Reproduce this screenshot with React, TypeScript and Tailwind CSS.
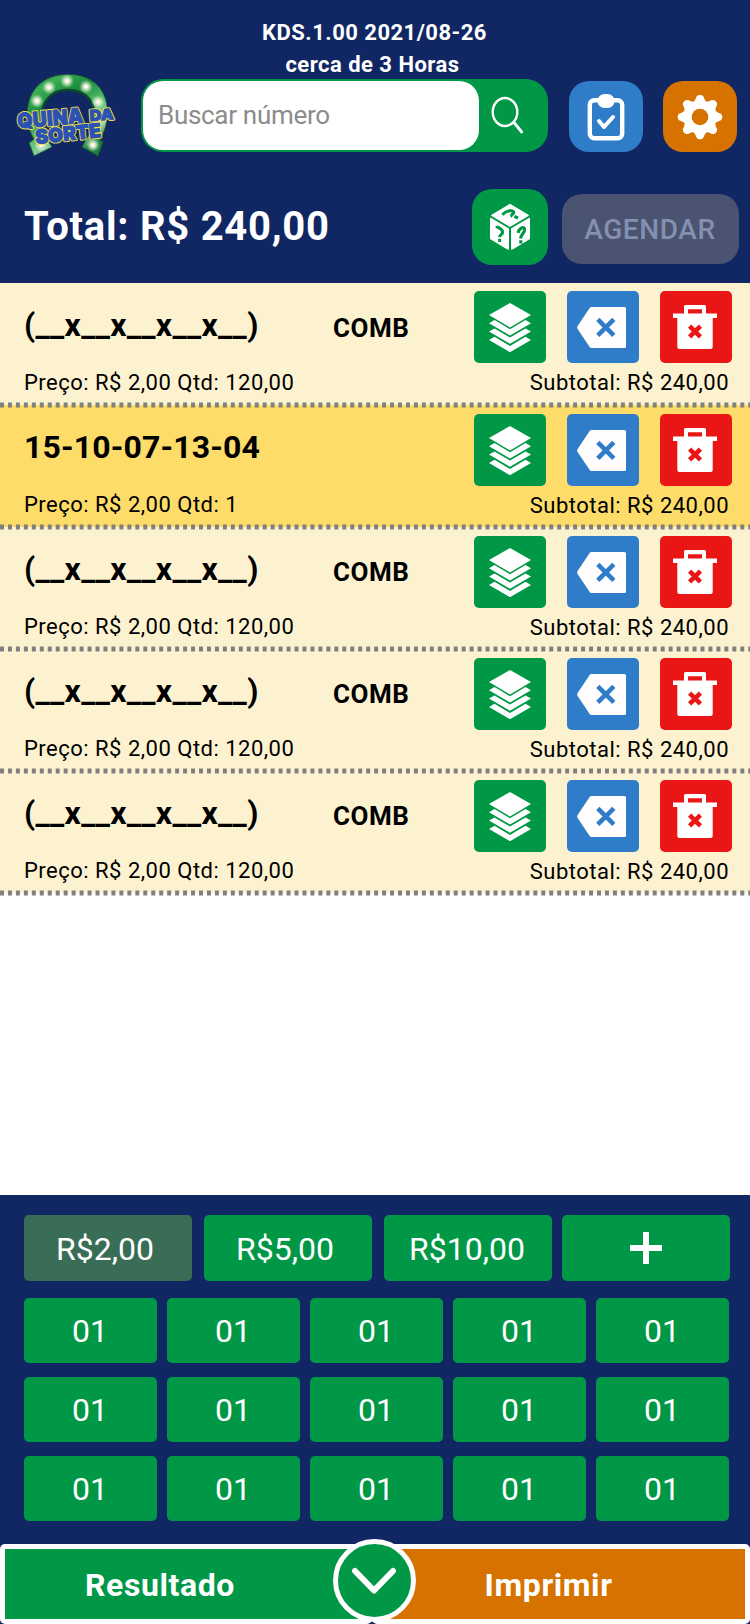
import React from "react";

const VALUES = ["R$2,00", "R$5,00", "R$10,00"];

const ROWS = [
  { label: "(__x__x__x__x__)", comb: true, qty: "120,00", active: false },
  { label: "15-10-07-13-04", comb: false, qty: "1", active: true },
  { label: "(__x__x__x__x__)", comb: true, qty: "120,00", active: false },
  { label: "(__x__x__x__x__)", comb: true, qty: "120,00", active: false },
  { label: "(__x__x__x__x__)", comb: true, qty: "120,00", active: false },
];

function LogoWords() {
  return (
    <>
      <text x="2" y="55.5" fontSize="21" textLength="66" lengthAdjust="spacingAndGlyphs" transform="rotate(-5 2 56)">QUINA</text>
      <text x="74" y="48" fontSize="15" textLength="24" lengthAdjust="spacingAndGlyphs" transform="rotate(-4 74 48)">DA</text>
      <text x="20" y="71" fontSize="19.5" textLength="66" lengthAdjust="spacingAndGlyphs" transform="rotate(-6 20 71)">SORTE</text>
    </>
  );
}

function Logo() {
  return (
    <svg width="100" height="86" viewBox="0 0 100 86">
      <defs>
        <linearGradient id="shoe" x1="0" y1="0" x2="0.6" y2="1">
          <stop offset="0" stopColor="#0c6a2b" />
          <stop offset="0.2" stopColor="#3fae58" />
          <stop offset="0.4" stopColor="#1a8a3c" />
          <stop offset="0.6" stopColor="#4db868" />
          <stop offset="0.85" stopColor="#a5d9ae" />
          <stop offset="1" stopColor="#1c7e3a" />
        </linearGradient>
        <radialGradient id="glow">
          <stop offset="0" stopColor="#fff" />
          <stop offset="0.4" stopColor="#f1fbe9" stopOpacity="0.8" />
          <stop offset="1" stopColor="#b9f0bd" stopOpacity="0" />
        </radialGradient>
      </defs>
      <path
        d="M13 70 L18 66 C5 46 8 1.5 52 1.5 C95 1.5 98 44 84 67 L87 69 L82 83 L66 74 L71 65 C86 48 82 16 52 16 C22 16 20 50 31 66 L36 74 L18 83 Z"
        fill="url(#shoe)"
        stroke="#17552f"
        strokeWidth="0.8"
      />
      <path d="M26 44 C24 8 80 8 79 44" fill="none" stroke="#0a4d25" strokeWidth="2" />
      {[[51, 8], [33, 14.3], [70, 13.7], [21, 28], [82, 29], [25, 72], [77, 72]].map(([x, y]) => (
        <g key={`${x}-${y}`}>
          <circle cx={x} cy={y} r="7" fill="url(#glow)" />
          <circle cx={x} cy={y} r="2.4" fill="#fffdf0" stroke="#d8c9a0" strokeWidth="0.6" />
        </g>
      ))}
      <g fontFamily="Inter, sans-serif" fontWeight="900" strokeLinejoin="round">
        <g fill="#f3e04a" stroke="#f3e04a" strokeWidth="2.8"><LogoWords /></g>
        <g fill="#2b51b4" stroke="#2b51b4" strokeWidth="1"><LogoWords /></g>
      </g>
    </svg>
  );
}

function SearchIcon() {
  return (
    <svg width="34" height="38" viewBox="0 0 34 38" fill="none" stroke="#fff">
      <ellipse cx="14" cy="16" rx="12.3" ry="14" strokeWidth="2.4" />
      <path d="M23 26.5 L30.7 36" strokeWidth="2.8" strokeLinecap="round" />
    </svg>
  );
}

function ClipboardIcon() {
  return (
    <svg width="38" height="48" viewBox="0 0 38 48" fill="none">
      <rect x="2.8" y="7.2" width="32.4" height="38" rx="4.5" stroke="#fff" strokeWidth="4.4" />
      <rect x="10.5" y="1" width="17" height="14" rx="7" fill="#fff" />
      <path d="M12 28 L17 34 L26 24" stroke="#fff" strokeWidth="4" strokeLinecap="round" strokeLinejoin="round" />
    </svg>
  );
}

function GearIcon() {
  return (
    <svg width="46" height="46" viewBox="-23 -23 46 46">
      {[0, 45, 90, 135, 180, 225, 270, 315].map((a) => (
        <path
          key={a}
          transform={`rotate(${a})`}
          d="M-8.5 -14 C-5.5 -15.5 -4.8 -17 -3.8 -19.8 C-2.8 -23.2 2.8 -23.2 3.8 -19.8 C4.8 -17 5.5 -15.5 8.5 -14 L0 0 Z"
          fill="#fff"
        />
      ))}
      <circle r="16" fill="#fff" />
      <circle r="8.3" fill="#d67300" />
    </svg>
  );
}

function DiceIcon() {
  return (
    <svg width="42" height="48" viewBox="0 0 42 48">
      <g fill="#fff" stroke="#fff" strokeWidth="1.6" strokeLinejoin="round">
        <path d="M21 1.8 L39 12.4 L21 23 L3 12.4 Z" />
        <path d="M1.8 15.6 L19.2 26 V46 L1.8 35.6 Z" />
        <path d="M40.2 15.6 L22.8 26 V46 L40.2 35.6 Z" />
      </g>
      <g fill="none" stroke="#009846" strokeWidth="3.1">
        <path d="M7.2 25 C8.6 23.4 14 26.2 13.6 29.8 C13.2 32 10.8 31 10.6 34.2" />
        <path d="M10.6 35.8 V39" />
        <path d="M29.2 29.8 C29.6 26 35 22.4 35.6 26.2 C36 29.8 32 31 31.6 35.6" />
        <path d="M31.8 37.2 V40.6" />
        <path d="M13.4 11.8 C16 8.6 22 6.2 24.6 8.8 C25.8 11 20.8 11.4 23.4 13.4" />
        <path d="M25.4 13.4 L29 15" />
      </g>
    </svg>
  );
}

function LayersIcon() {
  return (
    <svg width="42" height="49" viewBox="0 0 42 49" fill="#fff">
      <path d="M21 0 L42 12 L21 24.5 L0 12 Z" />
      {[0, 8.4, 16.8].map((d) => (
        <path key={d} transform={`translate(0 ${d})`} d="M0 20.2 L5.5 17 L21 26.2 L36.5 17 L42 20.2 L21 32.4 Z" />
      ))}
    </svg>
  );
}

function BackspaceIcon() {
  return (
    <svg className="mr-[3px]" width="49" height="41" viewBox="0 0 49 41">
      <path d="M14.5 0 H47.5 Q49 0 49 1.5 V39.5 Q49 41 47.5 41 H14.5 Q13.3 41 12.5 39.8 L0.6 22 Q-0.2 20.5 0.6 19 L12.5 1.2 Q13.3 0 14.5 0 Z" fill="#fffdfd" />
      <path d="M20.8 12.3 L36.8 28.3 M36.8 12.3 L20.8 28.3" stroke="#2f7dc9" strokeWidth="4.6" />
    </svg>
  );
}

function TrashIcon() {
  return (
    <svg className="mr-[2px]" width="44" height="44" viewBox="0 0 44 44">
      <path
        fillRule="evenodd"
        fill="#fff"
        d="M12.5 0 H31.5 Q33 0 33 1.5 V8.5 H44 V13 H39.7 V42 Q39.7 44 37.7 44 H6.3 Q4.3 44 4.3 42 V13 H0 V8.5 H11 V1.5 Q11 0 12.5 0 Z M15 4.3 V8.5 H29 V4.3 Z"
      />
      <path d="M16.6 21.2 L27.4 31.8 M27.4 21.2 L16.6 31.8" stroke="#ea1515" strokeWidth="4.6" />
    </svg>
  );
}

function Dots() {
  return (
    <svg className="absolute left-0 -bottom-[3px] z-10 block" width="750" height="6">
      <line x1="0" y1="3" x2="750" y2="3" stroke="#808080" strokeWidth="5" strokeDasharray="4 3.96" />
    </svg>
  );
}

function BetRow({ row, first }: { row: (typeof ROWS)[number]; first: boolean }) {
  return (
    <div className={`relative flex h-[122px] justify-between pl-6 pr-[18px] ${row.active ? "bg-[#fddc69]" : "bg-[#fdf2d0]"}`}>
      <div className="flex flex-col">
        <div className="flex h-[81px] items-center pt-[9px]">
          <div className={`w-[309px] pb-[6px] text-[32px] font-bold leading-10 ${row.active ? "tracking-[0.15px]" : "tracking-[0.3px]"}`}>{row.label}</div>
          <div className="text-[26px] font-bold leading-8 tracking-[0.5px]">{row.comb ? "COMB" : ""}</div>
        </div>
        <div className="pt-[5px] text-[22px] leading-7 tracking-[0.49px]">Preço: R$ 2,00 Qtd: {row.qty}</div>
      </div>
      <div className={`flex flex-col ${first ? "pt-[8px]" : "pt-[9px]"}`}>
        <div className="flex gap-[21px]">
          <button className="flex size-[72px] items-center justify-center rounded-[5px] bg-[#009846]"><LayersIcon /></button>
          <button className="flex size-[72px] items-center justify-center rounded-[5px] bg-[#2f7dc9]"><BackspaceIcon /></button>
          <button className="flex size-[72px] items-center justify-center rounded-[5px] bg-[#ea1515]"><TrashIcon /></button>
        </div>
        <div className="pr-[3px] pt-[6px] text-right text-[22px] leading-7 tracking-[0.49px]">Subtotal: R$ 240,00</div>
      </div>
      <Dots />
    </div>
  );
}

export default function App() {
  return (
    <div className="flex h-[1624px] w-[750px] flex-col overflow-hidden bg-white font-[Roboto,sans-serif] text-black">
      <header className="flex h-[283px] shrink-0 flex-col bg-[#112763] text-white">
        <div className="h-[79px] pr-px pt-[17px] text-center text-[22px] font-bold leading-8 tracking-[0.48px]">
          <div>KDS.1.00 2021/08-26</div>
          <div className="-ml-[4px]">cerca de 3 Horas</div>
        </div>
        <div className="flex h-[73px] pl-4">
          <div className="-mt-[6px] w-[125px]"><Logo /></div>
          <div className="flex h-[73px] w-[407px] rounded-[22px] bg-[#009846] py-[2px] pl-[2px]">
            <div className="flex h-[69px] w-[336px] items-center rounded-[20px] bg-white pl-[15px] text-[26px] text-[#8c8c8c]">
              <span className="tracking-[-0.3px]">Buscar número</span>
            </div>
            <div className="pl-3 pt-[15px]"><SearchIcon /></div>
          </div>
          <button className="ml-[21px] mt-[2px] flex h-[71px] w-[74px] items-center justify-center rounded-[20px] bg-[#2f7dc9]"><ClipboardIcon /></button>
          <button className="ml-5 mt-[2px] flex h-[71px] w-[74px] items-center justify-center rounded-[20px] bg-[#d67300]"><GearIcon /></button>
        </div>
        <div className="flex pl-6 pt-[37px]">
          <div className="w-[448px] pt-[13px] text-[40px] font-bold leading-[50px] tracking-[0.74px]">Total: R$ 240,00</div>
          <button className="flex size-[76px] items-center justify-center rounded-[20px] bg-[#009846]"><DiceIcon /></button>
          <button className="ml-[14px] mt-[5px] h-[70px] w-[177px] rounded-[20px] bg-[#4a5370] pr-px pt-[2px] text-[28px] font-medium tracking-[0.6px] text-[#8490b0]">AGENDAR</button>
        </div>
      </header>

      <main className="flex-1">
        {ROWS.map((row, i) => (
          <BetRow key={i} row={row} first={i === 0} />
        ))}
      </main>

      <section className="h-[349px] shrink-0 bg-[#112763] pl-6 pt-5 text-white">
        <div className="flex gap-3 text-[32px]">
          {VALUES.map((v, i) => (
            <button key={v} className={`h-[66px] w-[168px] shrink-0 rounded-[5px] pt-[2px] ${i === 2 ? "pr-[2px]" : "pr-[6px]"} ${i === 0 ? "bg-[#3a6d56]" : "bg-[#009846]"}`}>{v}</button>
          ))}
          <button className="-ml-[2px] flex h-[66px] w-[168px] shrink-0 items-center justify-center rounded-[5px] bg-[#009846]">
            <svg width="32" height="32" viewBox="0 0 32 32" stroke="#fff" strokeWidth="6"><path d="M16 0 V32 M0 16 H32" /></svg>
          </button>
        </div>
        <div className="mt-[17px] grid w-[705px] grid-cols-5 gap-x-[10px] gap-y-[14px] text-[32px]">
          {Array.from({ length: 15 }, (_, i) => (
            <button key={i} className="h-[65px] rounded-[5px] bg-[#009846] pr-px">01</button>
          ))}
        </div>
      </section>

      <footer className="relative h-[80px] shrink-0 bg-[#112763] text-white">
        <div className="flex text-[32px] font-bold tracking-[0.6px]">
          <button className="h-[80px] w-[372px] rounded-[5px] border-[5px] border-[#fffdfd] bg-[#009846] pr-[52px] pt-[2px]">Resultado</button>
          <button className="h-[80px] w-[378px] rounded-[5px] border-[5px] border-[#fffdfd] bg-[#d67300] pr-[25px] pt-[2px]">Imprimir</button>
        </div>
        <button className="absolute left-[333px] -top-[5px] flex size-[83px] items-center justify-center rounded-full border-[5px] border-[#fffdfd] bg-[#009846]">
          <svg className="mr-px" width="46" height="28" viewBox="0 0 46 28" fill="none" stroke="#fffdfd" strokeWidth="6" strokeLinecap="round" strokeLinejoin="round"><path d="M4 4 L23 23.5 L42 4" /></svg>
        </button>
      </footer>
    </div>
  );
}
